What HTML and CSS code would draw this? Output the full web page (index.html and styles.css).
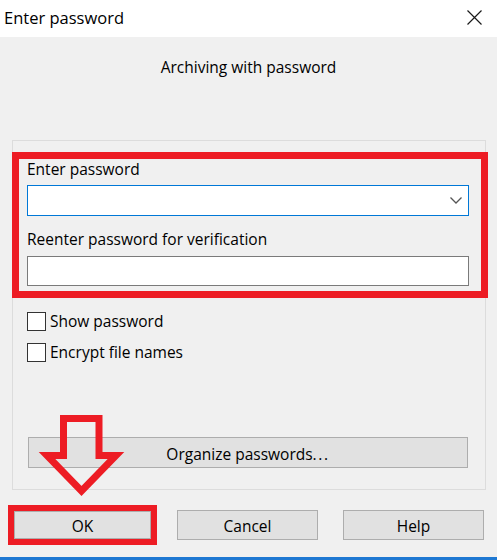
FILE: index.html
```html
<!DOCTYPE html>
<html lang="en">
<head>
<meta charset="utf-8">
<title>Enter password</title>
<link rel="stylesheet" href="styles.css">
</head>
<body>
<div class="window">
  <div class="titlebar">
    <span class="title">Enter password</span>
    <svg class="close" width="15" height="15" viewBox="0 0 15 15"><path d="M0.5 0.5 L14.5 14.5 M14.5 0.5 L0.5 14.5" stroke="#1a1a1a" stroke-width="1.2" fill="none"/></svg>
  </div>
  <div class="body">
    <div class="subtitle">Archiving with password</div>
    <div class="group">
      <div class="mark">
        <div class="lbl">Enter password</div>
        <div class="combo">
          <svg width="12" height="7" viewBox="0 0 12 7"><path d="M0.5 0.5 L6 6 L11.5 0.5" stroke="#555" stroke-width="1.3" fill="none"/></svg>
        </div>
        <div class="lbl lbl2">Reenter password for verification</div>
        <div class="input"></div>
      </div>
      <div class="checks">
        <div class="check"><span class="box"></span><span class="ctext">Show password</span></div>
        <div class="check"><span class="box"></span><span class="ctext">Encrypt file names</span></div>
      </div>
      <div class="btn organize">Organize passwords<span class="dots">...</span></div>
    </div>
    <div class="buttons">
      <div class="okmark"><div class="btn ok">OK</div></div>
      <div class="btn cancel">Cancel</div>
      <div class="btn help">Help</div>
    </div>
  </div>
  <div class="taskline"></div>
  <svg class="arrow" width="497" height="560" viewBox="0 0 497 560"><polygon points="63.5,418.5 99,418.5 99,455.5 116,455.5 81.5,491 47,455.5 63.5,455.5" fill="none" stroke="#ed1c24" stroke-width="7" stroke-linejoin="miter"/></svg>
</div>
</body>
</html>
```
FILE: styles.css
```css
* { box-sizing: border-box; }
html, body { margin: 0; padding: 0; }
body {
  font-family: "Open Sans", "Noto Sans", sans-serif;
  font-size: 15.5px;
  line-height: 20px;
  color: #000;
  background: #f0f0f0;
}
.window {
  position: relative;
  width: 497px;
  height: 560px;
  overflow: hidden;
  background: #f0f0f0;
}
.titlebar {
  height: 37px;
  background: #fff;
  display: flex;
  align-items: center;
  justify-content: space-between;
  padding-left: 4px;
  padding-right: 15px;
  padding-bottom: 2px;
}
.title {
  font-size: 16.5px;
}
.close {
  display: block;
}
.body {
  height: 520px;
  padding-top: 20px;
}
.subtitle {
  text-align: center;
}
.group {
  margin-top: 63px;
  margin-left: 12px;
  width: 474px;
  border: 1px solid #dcdcdc;
  padding-bottom: 21px;
}
.mark {
  margin-top: 11px;
  margin-left: -1px;
  margin-right: -3px;
  border: 7px solid #ed1c24;
  padding: 0 0 5px 8px;
}
.combo {
  margin-top: 6px;
  width: 442px;
  height: 31px;
  background: #fff;
  border: 1px solid #0078d7;
  display: flex;
  align-items: center;
  justify-content: flex-end;
  padding-right: 6px;
}
.combo svg { display: block; }
.lbl2 { margin-top: 13px; }
.input {
  margin-top: 7px;
  width: 442px;
  height: 30px;
  background: #fff;
  border: 1px solid #7a7a7a;
}
.checks {
  margin-top: 13px;
  margin-left: 14px;
  display: flex;
  flex-direction: column;
  gap: 11px;
}
.check {
  display: flex;
  align-items: center;
  height: 20px;
}
.box {
  width: 19px;
  height: 19px;
  background: #fff;
  border: 1px solid #333;
  margin-right: 4px;
}
.btn {
  background: #e1e1e1;
  border: 1px solid #adadad;
  display: flex;
  align-items: center;
  justify-content: center;
  padding-top: 2px;
}
.dots {
  letter-spacing: 1.6px;
}
.organize {
  margin-top: 75px;
  margin-left: 15px;
  width: 440px;
  height: 31px;
}
.buttons {
  margin-top: 15px;
  display: flex;
  align-items: center;
  padding-left: 8px;
}
.okmark {
  width: 149px;
  height: 40px;
  border: 6px solid #ed1c24;
}
.ok {
  height: 28px;
  width: 100%;
}
.cancel {
  margin-left: 20px;
  width: 141px;
  height: 30px;
}
.help {
  margin-left: 25px;
  width: 141px;
  height: 30px;
}
.taskline {
  height: 3px;
  background: #1e78d2;
}
.arrow {
  position: absolute;
  left: 0;
  top: 0;
  pointer-events: none;
}
```
